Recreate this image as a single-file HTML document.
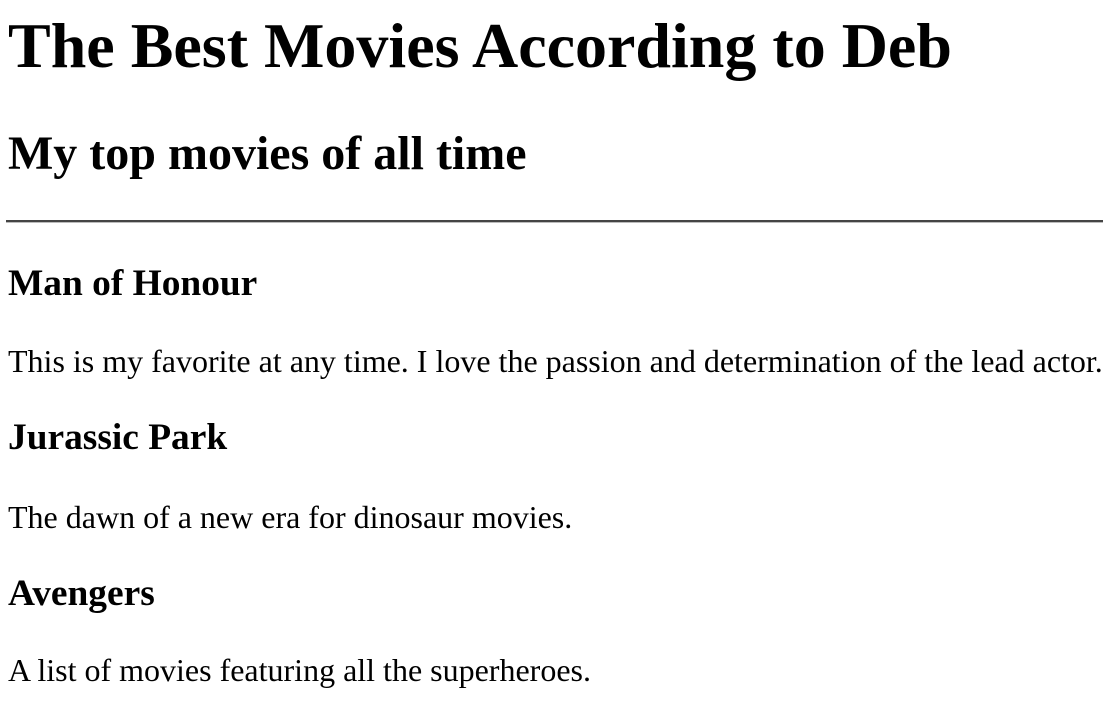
<!DOCTYPE html>
<html><head><meta charset="utf-8"><style>
html,body{margin:0;padding:0;background:#fff;width:1103px;height:717px;overflow:hidden}
body{font-family:"Liberation Serif",serif;color:#000;position:relative}
.t{position:absolute;left:8px;margin:0;line-height:1;white-space:nowrap}
h1.t{font-size:64px;font-weight:bold}
h2.t{font-size:48px;font-weight:bold}
h3.t{font-size:37.4px;font-weight:bold}
p.t{font-size:32px}
hr{position:absolute;left:6px;width:1097px;top:220px;margin:0;border:0;border-top:2px solid #444;border-bottom:1px solid #bbb;height:0;box-sizing:content-box}
</style></head><body>
<h1 class="t" style="top:14px">The Best Movies According to Deb</h1>
<h2 class="t" style="top:130px">My top movies of all time</h2>
<hr>
<h3 class="t" style="top:265px">Man of Honour</h3>
<p class="t" style="top:345px">This is my favorite at any time. I love the passion and determination of the lead actor.</p>
<h3 class="t" style="top:419px">Jurassic Park</h3>
<p class="t" style="top:501px">The dawn of a new era for dinosaur movies.</p>
<h3 class="t" style="top:575px">Avengers</h3>
<p class="t" style="top:654px">A list of movies featuring all the superheroes.</p>
</body></html>
